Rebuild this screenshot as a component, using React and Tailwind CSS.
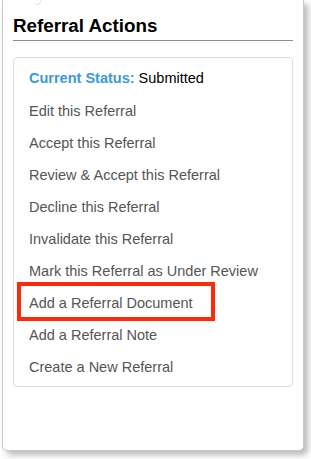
const actions = [
  "Edit this Referral",
  "Accept this Referral",
  "Review & Accept this Referral",
  "Decline this Referral",
  "Invalidate this Referral",
  "Mark this Referral as Under Review",
  "Add a Referral Document",
  "Add a Referral Note",
  "Create a New Referral",
]

export default function App() {
  return (
    <div className="w-[311px] h-[459px] bg-white overflow-hidden font-['Liberation_Sans',Arial,sans-serif]">
      <div className="relative ml-[2px] w-[302px] h-[451px] bg-white border-l border-r border-b border-[#c8c8c8] rounded-b-[5px] shadow-[4px_4px_6px_rgba(0,0,0,0.28)] px-[10px] pt-[14px]">
        <svg className="absolute left-[30px] top-0" width="10" height="6" viewBox="0 0 10 6">
          <path d="M8 0 Q8 4 3 5" fill="none" stroke="#e2e2e2" strokeWidth="1" />
        </svg>

        <h2 className="h-[27px] pb-[3px] border-b border-[#8e8e8e] text-[18.8px] leading-[24px] font-bold text-black">
          Referral Actions
        </h2>

        <div className="mt-[16px] border border-[#dcdcdc] rounded-[4px] pl-[15px] pt-[4px] pb-[3px]">
          <div className="h-[33px] leading-[32px] text-[14.5px]">
            <span className="font-bold text-[#3b99d9]">Current Status:</span>{" "}
            <span className="text-black">Submitted</span>
          </div>
          {actions.map((label, i) => (
            <div key={i} className="relative h-[32px] leading-[32px] text-[14.5px] text-[#555555]">
              {label}
              {label === "Add a Referral Document" && (
                <div className="absolute left-[-12px] top-[-5px] w-[198px] h-[39px] border-[4px] border-[#fb2a0a]" />
              )}
            </div>
          ))}
        </div>
      </div>
    </div>
  )
}
